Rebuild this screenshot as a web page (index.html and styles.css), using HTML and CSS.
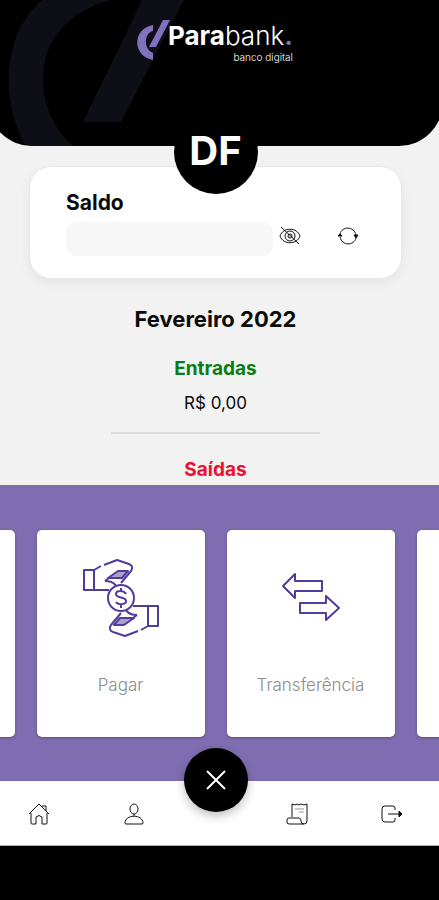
FILE: index.html
```
<!DOCTYPE html>
<html lang="pt-BR">
<head>
<meta charset="UTF-8">
<meta name="viewport" content="width=device-width, initial-scale=1.0">
<title>Parabank</title>
<link rel="stylesheet" href="styles.css">
</head>
<body>

<header class="header">
  <svg class="header-mark" width="190" height="146" viewBox="0 0 190 146" aria-hidden="true">
    <path d="M42 0C2 34 0 100 25 144L32 146H73C36 112 34 58 62 28C76 13 94 4 112 0Z"/>
    <path d="M146 -8H188L121 122H83Z"/>
  </svg>
  <div class="logo">
    <svg width="34" height="42" viewBox="0 0 34 42" aria-hidden="true">
      <path d="M17 5V11C8 13 7 29 17 33V40C-4 36 -4 9 17 5Z"/>
      <path d="M27 0H34L20 27H13Z"/>
    </svg>
    <div class="logo-text">
      <span class="logo-name"><b>Para</b>bank<i>.</i></span>
      <span class="logo-tagline">banco digital</span>
    </div>
  </div>
  <div class="avatar">DF</div>
</header>

<main class="content">
  <section class="balance">
    <h2>Saldo</h2>
    <div class="balance-row">
      <div class="balance-value"></div>
      <button type="button" class="icon-button" aria-label="Mostrar saldo">
        <svg width="24" height="20" viewBox="0 0 24 20">
          <path d="M2 10C5 1 19 1 22 10C19 19 5 19 2 10Z"/>
          <circle cx="12" cy="10" r="5"/>
          <circle cx="12" cy="10" r="2"/>
          <path d="M3 1L21 18"/>
        </svg>
      </button>
      <button type="button" class="icon-button" aria-label="Atualizar saldo">
        <svg width="24" height="20" viewBox="0 0 24 20">
          <path d="M4 8C6 0 18 0 20 9M20 12C18 20 6 20 4 11"/>
          <path class="solid" d="M2 10L4 8L6 10ZM18 9H22L20 12Z"/>
        </svg>
      </button>
    </div>
  </section>

  <section class="summary">
    <h1>Fevereiro 2022</h1>
    <h3 class="income">Entradas</h3>
    <p>R$ 0,00</p>
    <hr>
    <h3 class="expense">Saídas</h3>
  </section>
</main>

<section class="actions">
  <button type="button" class="action" aria-label="Anterior"></button>
  <button type="button" class="action">
    <svg width="76" height="78" viewBox="0 0 76 78">
      <g id="hand">
        <path d="M1 11H11V31H1ZM11 11L18 7M21 6L34 1L46 5Q51 7 48 12L38 24M22 22C28 22 33 24 34 30M11 31H26M22 22L26 19"/>
        <path class="tint" d="M25 19L35 12H45L39 19Z"/>
      </g>
      <use href="#hand" transform="rotate(180 38 39)"/>
      <circle class="coin" cx="38" cy="39" r="13"/>
      <path d="M43 35C41 31 33 31 33 35C33 40 43 37 43 42C43 46 35 46 33 43M38 29V32M38 46V49"/>
    </svg>
    <span>Pagar</span>
  </button>
  <button type="button" class="action">
    <svg width="60" height="78" viewBox="0 0 60 78">
      <path d="M2 27L14 15V22H41V32H14V39ZM58 49L45 37V44H19V54H45V61Z"/>
    </svg>
    <span>Transferência</span>
  </button>
  <button type="button" class="action" aria-label="Próximo"></button>
</section>

<nav class="navbar">
  <a href="#" aria-label="Início">
    <svg width="22" height="22" viewBox="0 0 22 22">
      <path d="M1 11L11 1L21 11M3 10V20Q3 21 4 21H8V14Q11 11 14 14V21H18Q19 21 19 20V10M14 3H18V8"/>
    </svg>
  </a>
  <a href="#" class="profile" aria-label="Perfil">
    <svg width="22" height="22" viewBox="0 0 22 22">
      <ellipse cx="11" cy="6" rx="4" ry="5"/>
      <path d="M11 11V13M2 20C2 11 20 11 20 20Q20 21 19 21H3Q2 21 2 20Z"/>
    </svg>
  </a>
  <button type="button" class="close-button" aria-label="Fechar">
    <svg width="20" height="20" viewBox="0 0 20 20">
      <path d="M1 1L19 19M19 1L1 19"/>
    </svg>
  </button>
  <a href="#" class="statement" aria-label="Extrato">
    <svg width="22" height="22" viewBox="0 0 22 22">
      <path d="M6 14V1L9 2L11 1L13 2L15 1L18 2L21 1V18Q21 21 18 21H3Q0 21 1 17Q1 15 3 15H13Q15 15 15 18Q15 21 18 21"/>
      <path class="soft" d="M9 6H18M13 9H18"/>
    </svg>
  </a>
  <a href="#" aria-label="Sair">
    <svg width="22" height="22" viewBox="0 0 22 22">
      <path d="M14 7V5Q14 3 12 3H4Q1 3 1 6V16Q1 19 4 19H12Q14 19 14 17V15M7 11H20"/>
      <path class="solid" d="M18 8L21 11L18 14Z"/>
    </svg>
  </a>
</nav>

</body>
</html>
```
FILE: styles.css
```
* {
  box-sizing: border-box;
}
body {
  margin: 0;
  height: 100vh;
  padding-bottom: 54px;
  display: flex;
  flex-direction: column;
  background-color: #000;
  font-family: "Inter", "Liberation Sans", sans-serif;
  color: #0b0b0b;
  overflow-x: hidden;
}
h1, h2, h3, p {
  margin: 0;
}
button {
  font-family: inherit;
  border: 0;
  padding: 0;
  cursor: pointer;
}
svg {
  fill: none;
  stroke: currentColor;
}
.solid {
  fill: currentColor;
}

/* Header */
.header {
  position: relative;
  z-index: 1;
  flex: none;
  height: 146px;
  margin: 0 -4px 0 -12px;
  padding: 20px 0 0 148px;
  background-color: #000;
  border-radius: 0 0 44px 44px;
}
.header-mark {
  position: absolute;
  top: 0;
  left: 12px;
  fill: #0e0e16;
  stroke: none;
}
.logo {
  position: relative;
  display: flex;
}
.logo > svg {
  fill: #8271bd;
  stroke: none;
}
.logo-text {
  display: flex;
  flex-direction: column;
  align-items: flex-start;
  margin-left: -2px;
  color: #fff;
}
.logo-name {
  font-size: 26px;
  line-height: 32px;
  font-weight: 300;
}
.logo-name b {
  font-weight: 700;
}
.logo-name i {
  color: #8271bd;
  font-style: normal;
  font-weight: 700;
}
.logo-tagline {
  align-self: flex-end;
  font-size: 10px;
  line-height: 10px;
  font-weight: 300;
}
.avatar {
  position: absolute;
  top: 110px;
  left: 50%;
  width: 84px;
  height: 84px;
  margin-left: -42px;
  border-radius: 50%;
  background-color: #000;
  color: #fff;
  font-size: 40px;
  line-height: 82px;
  font-weight: 700;
  text-align: center;
}

/* Balance and month summary, runs up behind the rounded header */
.content {
  flex: 1;
  min-height: 0;
  margin-top: -46px;
  padding: 66px 37px 0 29px;
  background-color: #f2f2f2;
  overflow: hidden;
}
.balance {
  padding: 24px 36px 22px;
  background-color: #fff;
  border: 1px solid #e8e8e8;
  border-radius: 22px;
  box-shadow: 0 4px 12px rgba(0, 0, 0, 0.06);
}
.balance h2 {
  font-size: 21px;
  line-height: 24px;
}
.balance-row {
  display: flex;
  align-items: center;
  margin-top: 7px;
}
.balance-value {
  flex: 1;
  height: 34px;
  border-radius: 10px;
  background-color: #f7f7f7;
}
.icon-button {
  display: flex;
  margin: -6px 0 0 5px;
  background: none;
  color: #111;
}
.icon-button + .icon-button {
  margin-left: 34px;
  margin-right: 5px;
}
.summary {
  padding-top: 27px;
  text-align: center;
}
.summary h1 {
  font-size: 22px;
  line-height: 26px;
}
.summary h3 {
  font-size: 19px;
  line-height: 24px;
}
.summary .income {
  margin-top: 25px;
  color: #0b7d12;
}
.summary p {
  margin-top: 10px;
  font-size: 17px;
  line-height: 24px;
}
.summary hr {
  width: 56%;
  height: 2px;
  margin: 17px auto 24px;
  border: 0;
  background-color: #dedede;
}
.summary .expense {
  color: #ec1130;
}

/* Shortcut cards */
.actions {
  flex: none;
  display: flex;
  justify-content: center;
  gap: 22px;
  padding: 45px 8px 44px 0;
  background-color: #7f6db1;
  overflow: hidden;
}
.action {
  flex: none;
  display: flex;
  flex-direction: column;
  align-items: center;
  width: 168px;
  height: 207px;
  padding-top: 29px;
  background-color: #fff;
  border-radius: 5px;
  box-shadow: 0 1px 3px rgba(0, 0, 0, 0.3);
  color: #8c8c8c;
  font-size: 17px;
  line-height: 24px;
  font-weight: 300;
}
.action svg {
  margin-bottom: 36px;
  stroke: #513c9c;
  stroke-width: 2;
  stroke-linejoin: round;
}
.action .tint {
  fill: #aaa0d0;
}
.action .coin {
  fill: #fff;
}

/* Bottom bar */
.navbar {
  position: relative;
  flex: none;
  display: flex;
  align-items: center;
  justify-content: space-between;
  height: 65px;
  padding: 1px 36px 0 28px;
  background-color: #fff;
  border-bottom: 1px solid #aaa;
}
.navbar a {
  display: flex;
  color: #111;
}
.navbar .soft {
  stroke: #999;
}
.navbar .profile {
  margin-left: 34px;
}
.navbar .statement {
  margin-right: 34px;
}
.close-button {
  display: flex;
  align-items: center;
  justify-content: center;
  width: 64px;
  height: 64px;
  margin-top: -68px;
  border-radius: 50%;
  background-color: #000;
  color: #fff;
  box-shadow: 0 4px 10px rgba(0, 0, 0, 0.25);
}
.close-button svg {
  stroke-width: 2;
}
```
